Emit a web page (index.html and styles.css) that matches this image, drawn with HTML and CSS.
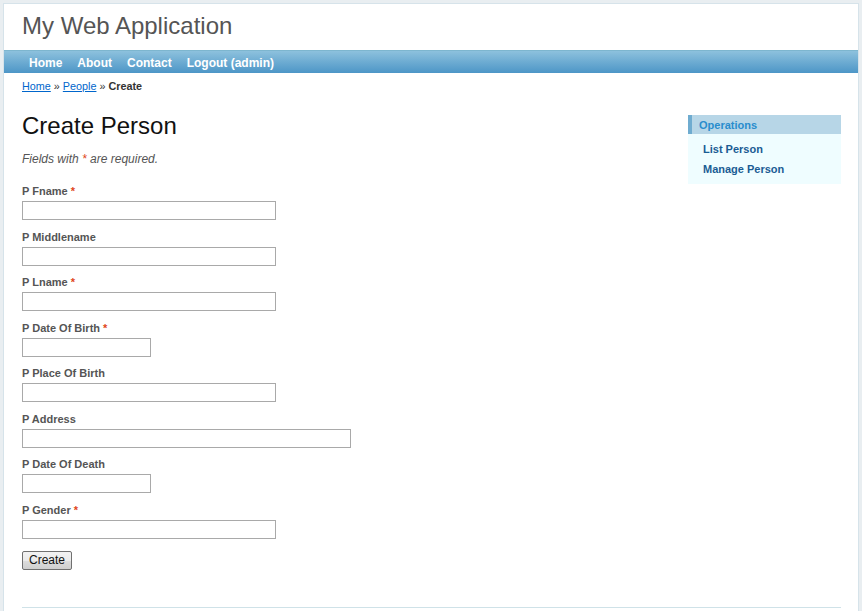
FILE: index.html
```html
<!DOCTYPE html>
<html>
<head>
<meta charset="utf-8">
<title>My Web Application - Create Person</title>
<link rel="stylesheet" href="styles.css">
</head>
<body>
<div class="page">
  <div class="header"><div class="logo">My Web Application</div></div>
  <div class="mainmenu">
    <ul>
      <li><a href="#">Home</a></li>
      <li><a href="#">About</a></li>
      <li><a href="#">Contact</a></li>
      <li><a href="#">Logout (admin)</a></li>
    </ul>
  </div>
  <div class="breadcrumbs"><a href="#">Home</a> &raquo; <a href="#">People</a> &raquo; <span>Create</span></div>
  <div class="main">
    <div class="content">
      <h1>Create Person</h1>
      <p class="note">Fields with <span class="required">*</span> are required.</p>
      <form class="form">
        <div class="row"><label>P Fname <span class="required">*</span></label><input class="w-long" type="text"></div>
        <div class="row"><label>P Middlename</label><input class="w-long" type="text"></div>
        <div class="row"><label>P Lname <span class="required">*</span></label><input class="w-long" type="text"></div>
        <div class="row"><label>P Date Of Birth <span class="required">*</span></label><input class="w-short" type="text"></div>
        <div class="row"><label>P Place Of Birth</label><input class="w-long" type="text"></div>
        <div class="row"><label>P Address</label><input class="w-wide" type="text"></div>
        <div class="row"><label>P Date Of Death</label><input class="w-short" type="text"></div>
        <div class="row"><label>P Gender <span class="required">*</span></label><input class="w-long" type="text"></div>
        <div class="buttons"><button type="button" class="btn">Create</button></div>
      </form>
    </div>
    <div class="sidebar">
      <div class="portlet">
        <div class="portlet-decoration"><div class="portlet-title">Operations</div></div>
        <div class="portlet-content">
          <ul class="operations">
            <li><a href="#">List Person</a></li>
            <li><a href="#">Manage Person</a></li>
          </ul>
        </div>
      </div>
    </div>
  </div>
  <div class="footer"></div>
</div>
</body>
</html>
```
FILE: styles.css
```css
* { box-sizing: border-box; }
html, body { margin: 0; padding: 0; }
body {
  background: #e9eef1;
  font-family: "Liberation Sans", Arial, sans-serif;
  font-size: 12px;
  color: #555;
  overflow: hidden;
}
.page {
  margin: 3px 3px 0 3px;
  background: #fff;
  border: 1px solid #d6e3ea;
  min-height: 660px;
}
.header {
  height: 46px;
  display: flex;
  align-items: center;
  padding-left: 18px;
}
.logo {
  font-size: 24px;
  color: #555;
  line-height: 28px;
  margin-top: -2px;
}
.mainmenu {
  height: 23px;
  background: linear-gradient(#8dc1dd, #4d96c7);
  border-top: 1px solid #7db6cf;
}
.mainmenu ul {
  list-style: none;
  margin: 0;
  padding: 2px 0 0 17.5px;
  display: flex;
  gap: 0;
  height: 22px;
  align-items: center;
}
.mainmenu a {
  display: block;
  padding: 0 7.5px;
  color: #fff;
  font-weight: bold;
  font-size: 12px;
  text-decoration: none;
  line-height: 14px;
}
.breadcrumbs {
  padding: 6px 18px 0;
  font-size: 10.8px;
  line-height: 14px;
  color: #333;
}
.breadcrumbs a { color: #0066cc; text-decoration: underline; }
.breadcrumbs span { color: #333; font-weight: bold; }
.main {
  display: flex;
  justify-content: space-between;
  padding: 0 17px 0 18px;
}
.content { padding-top: 19px; }
h1 {
  font-size: 24px;
  font-weight: normal;
  color: #111;
  margin: 0;
  line-height: 28px;
}
.note {
  font-style: italic;
  margin: 12px 0 0;
  line-height: 14px;
  color: #555;
}
.required { color: #e0461a; font-style: normal; }
.note .required { font-style: italic; }
.form { margin-top: 18px; }
.row {
  display: flex;
  flex-direction: column;
  align-items: flex-start;
  margin-bottom: 9.5px;
}
.row label {
  font-weight: bold;
  font-size: 11px;
  line-height: 14px;
  color: #555;
  margin-bottom: 3px;
}
.row label .required { font-weight: bold; }
input {
  height: 19px;
  border: 1px solid #a9a9a9;
  padding: 0 2px;
  margin: 0;
  font-size: 12px;
  background: #fff;
}
.w-long { width: 254px; }
.w-short { width: 129px; }
.w-wide { width: 329px; }
.buttons { padding-top: 2.5px; }
.btn {
  width: 50px;
  height: 19px;
  padding: 0;
  font-family: "Liberation Sans", Arial, sans-serif;
  font-size: 12px;
  color: #111;
  border: 1px solid #707070;
  border-radius: 2px;
  background: linear-gradient(#f2f2f2 0%, #ebebeb 50%, #dddddd 51%, #cfcfcf 100%);
}
.sidebar {
  width: 153px;
  padding-top: 22px;
}
.portlet-decoration {
  height: 19px;
  background: #b7d6e7;
  border-left: 4px solid #6facd0;
  padding-left: 7px;
  display: flex;
  align-items: center;
}
.portlet-title {
  font-size: 11px;
  font-weight: bold;
  color: #298dcd;
  line-height: 14px;
}
.portlet-content {
  background: #effdff;
  height: 50px;
  padding: 8px 0 0 15px;
}
.operations { list-style: none; margin: 0; padding: 0; }
.operations li { line-height: 14px; margin-bottom: 6px; }
.operations a {
  font-size: 11px;
  font-weight: bold;
  color: #1a5c94;
  text-decoration: none;
}
.footer {
  margin: 37px 17px 0 18px;
  border-top: 1px solid #cfe2e8;
}
```
